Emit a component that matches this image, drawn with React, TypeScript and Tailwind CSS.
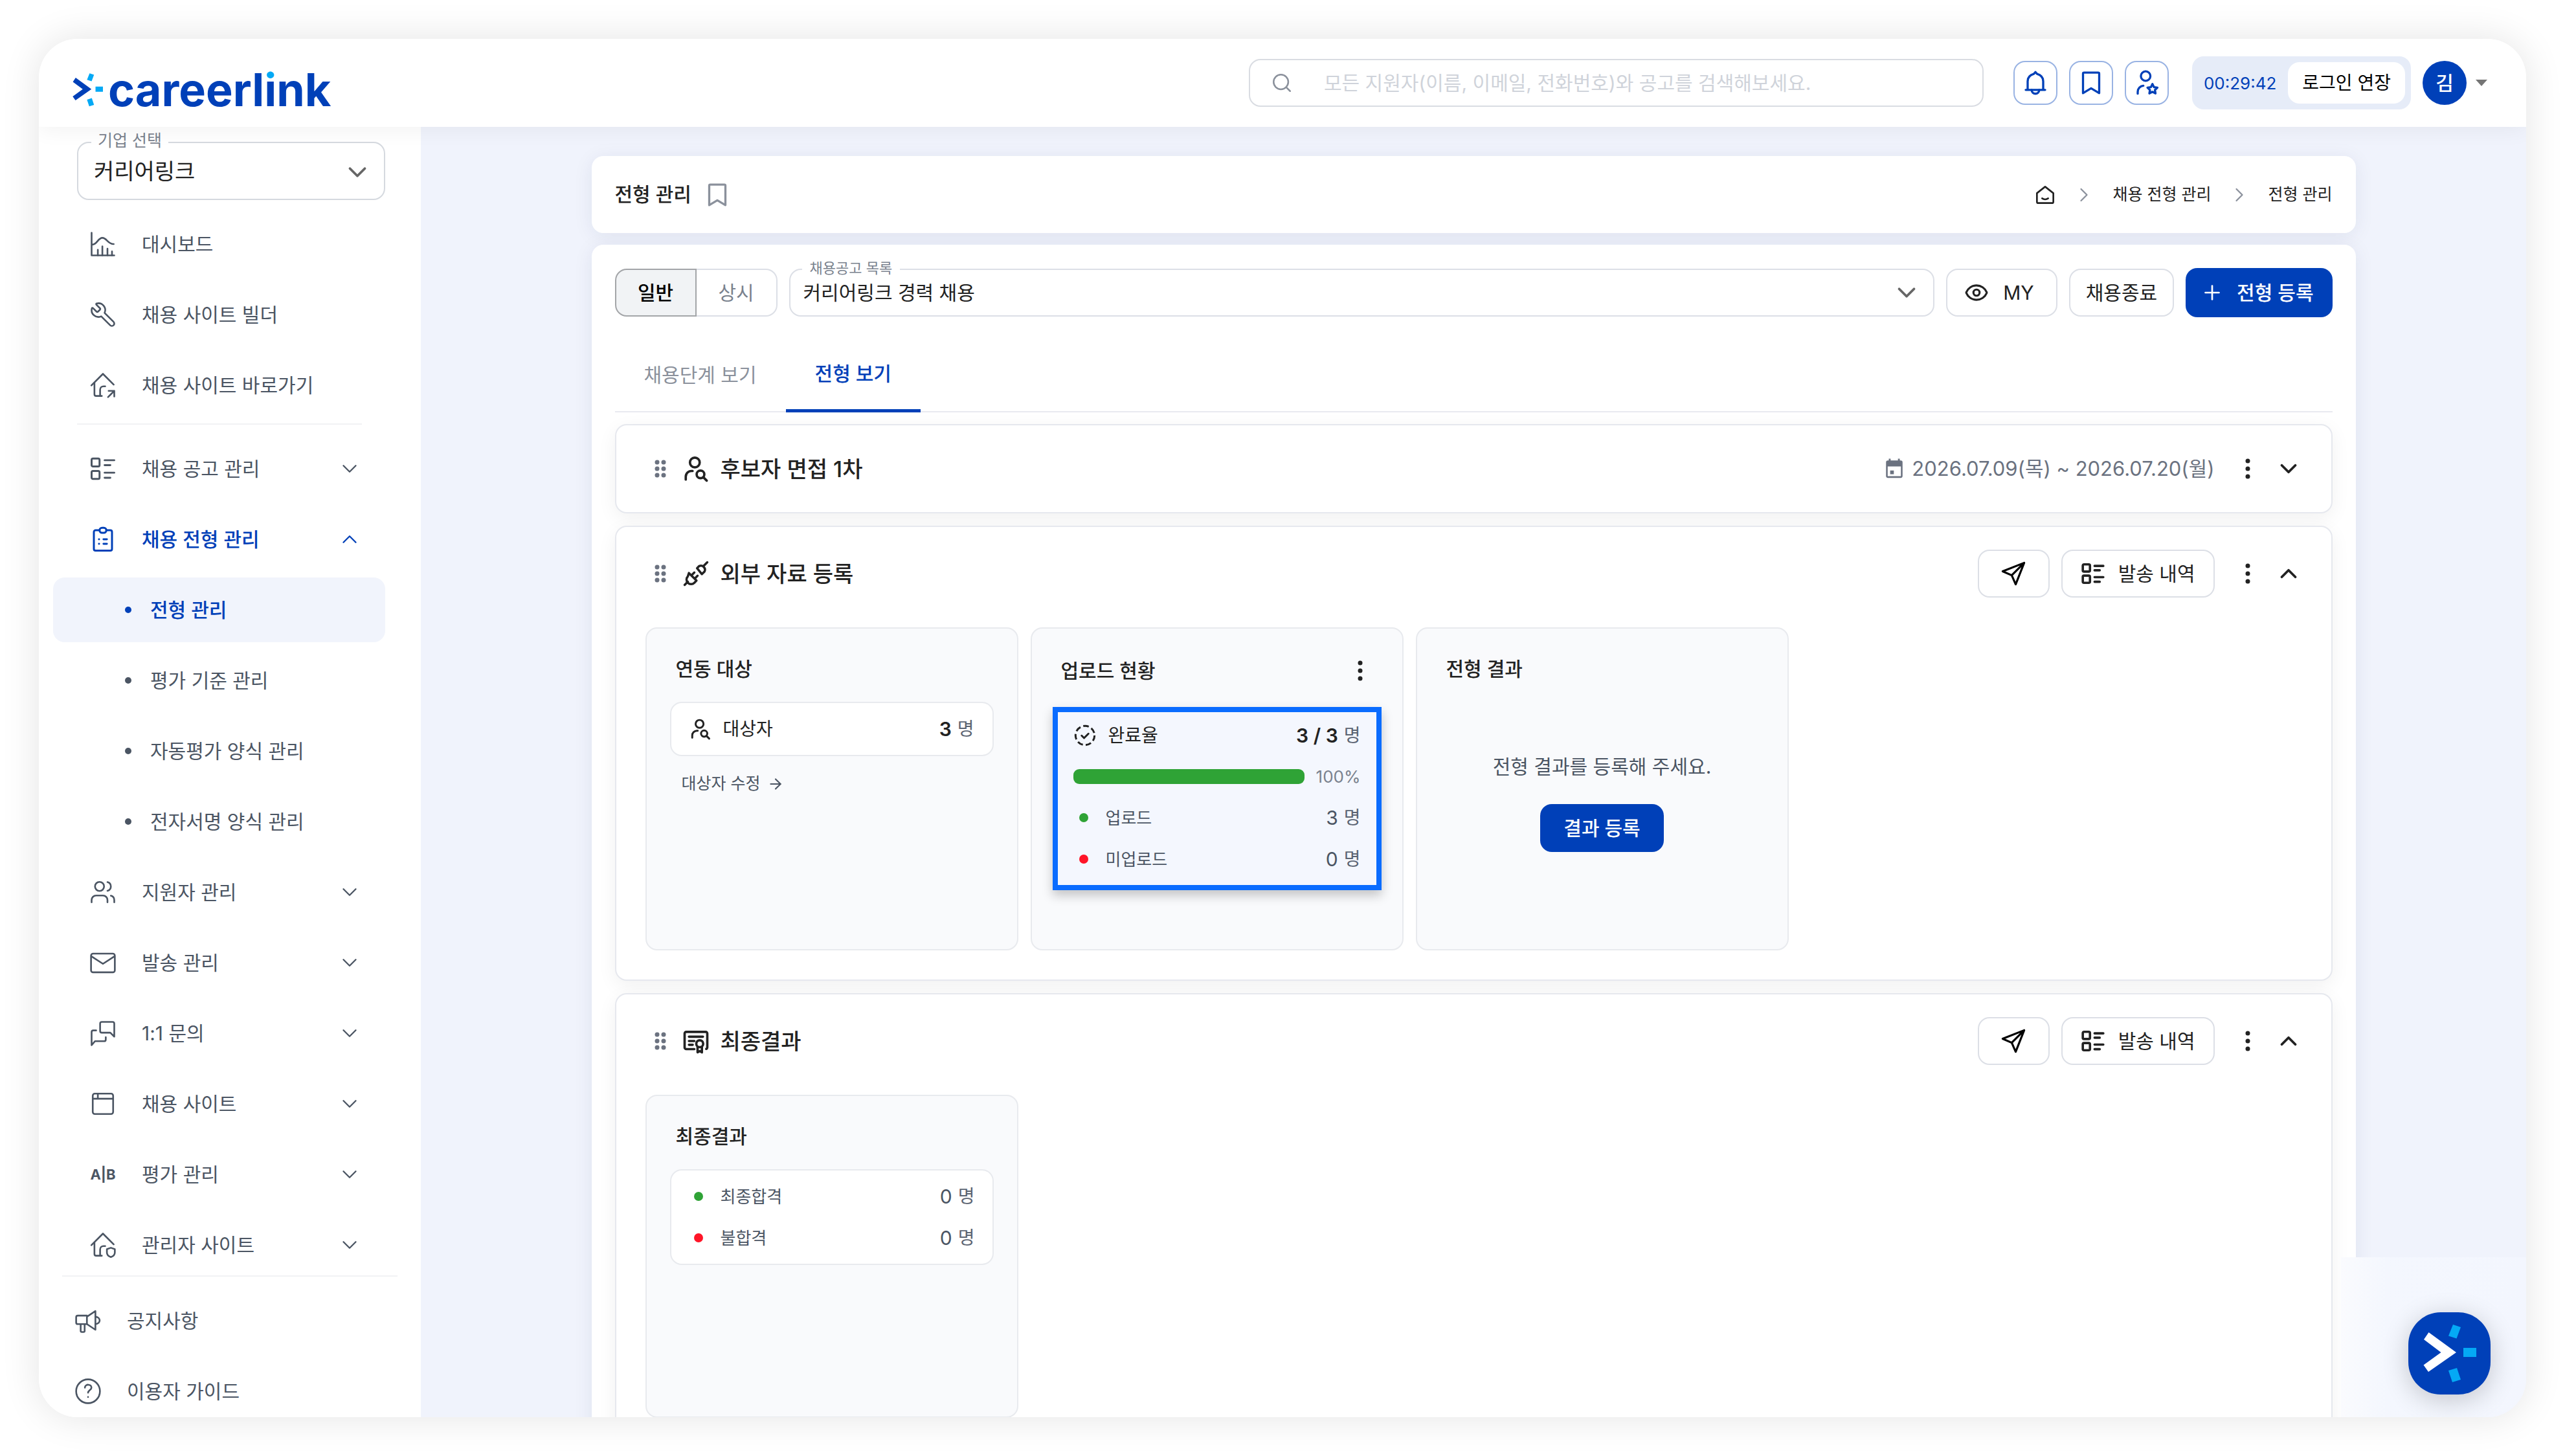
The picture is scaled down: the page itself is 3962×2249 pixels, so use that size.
import type { ReactNode } from "react";
import { ArrowRight, ChevronDown, ChevronRight, ChevronUp, Eye, Plus, Search, Users, Wrench } from "lucide-react";

type IconProps = { className?: string; width?: number; children?: ReactNode };

const Icon = ({ className = "size-[42px]", width = 1.5, children }: IconProps) => (
  <svg
    className={"shrink-0 " + className}
    viewBox="0 0 24 24"
    fill="none"
    stroke="currentColor"
    strokeWidth={width}
    strokeLinecap="round"
    strokeLinejoin="round"
    aria-hidden="true"
  >
    {children}
  </svg>
);

const ChartIcon = () => (
  <Icon>
    <path d="M2 2v20h20" />
    <path d="M2.5 12.5C7 12.5 7.500 6.500 11.500 6.500S16 12 21.500 12" />
    <path d="M7.500 17v5M11.500 14v8M16 16v6M20 18.500V22" />
  </Icon>
);

const house = (
  <>
    <path d="M1.800 12.200 12 2l9.500 9.500" />
    <path d="M4.500 10v10a1.500 1.500 0 0 0 1.500 1.500h5" />
    <path d="M9.500 21.500V16a3 3 0 0 1 3-3h1.500" />
  </>
);

const HomeLinkIcon = () => (
  <Icon>
    {house}
    <path d="M16.500 22.500l5.500-5.500M17 17h5v5" />
  </Icon>
);

const HomeShieldIcon = () => (
  <Icon>
    {house}
    <path d="M19 14.500l3.500 1.200v3c0 2-1.500 3.300-3.500 4-2-.7-3.500-2-3.500-4v-3z" />
  </Icon>
);

const ListIcon = ({ className, width = 2 }: IconProps) => (
  <Icon className={className} width={width}>
    <rect x="2" y="3" width="7" height="7" rx="1.200" />
    <rect x="2" y="14" width="7" height="7" rx="1.200" />
    <path d="M13.500 4.500h8.500M13.500 8.800h5M13.500 15.500h8.500M13.500 20h5" />
  </Icon>
);

const ClipboardIcon = () => (
  <Icon width={1.7}>
    <path d="M9 4H5.500A1.500 1.500 0 0 0 4 5.500v15A1.500 1.500 0 0 0 5.500 22h13a1.500 1.500 0 0 0 1.500-1.500v-15A1.500 1.500 0 0 0 18.500 4H15" />
    <rect x="9" y="1.800" width="6" height="4.500" rx="2.200" />
    <path d="M8.500 12h.1M8.500 16h.1M12.500 12h3M12.500 16h3" />
  </Icon>
);

const MailIcon = () => (
  <Icon>
    <rect x="1.500" y="4" width="21" height="16.500" rx="1.800" />
    <path d="M2 6.500l10 6.500 10-6.500" />
  </Icon>
);

const ChatIcon = () => (
  <Icon>
    <path d="M11 2h9.500A1.500 1.500 0 0 1 22 3.500V15l-3.500-3.500H11A1.500 1.500 0 0 1 9.500 10V3.500A1.500 1.500 0 0 1 11 2z" />
    <path d="M6 9.500H3.500A1.500 1.500 0 0 0 2 11v11.500L5 19h8a1.500 1.500 0 0 0 1.500-1.500v-2" />
  </Icon>
);

const BrowserIcon = () => (
  <Icon>
    <rect x="3" y="3" width="18" height="18" rx="1.800" />
    <path d="M3 7.500h18M7.500 3v4.500" />
  </Icon>
);

const MegaphoneIcon = () => (
  <Icon>
    <path d="M18.500 3.500v16.500l-7.500-5V8.500z" />
    <path d="M11 7.500H3A1.500 1.500 0 0 0 1.500 9v4.500A1.500 1.500 0 0 0 3 15h8" />
    <path d="M5.500 15v6a1 1 0 0 0 1 1h1.500a1 1 0 0 0 1-1v-6" />
    <path d="M18.500 8.500c5 .5 5 6 0 6.500" />
  </Icon>
);

const HelpIcon = () => (
  <Icon>
    <circle cx="12" cy="12" r="10.500" />
    <path d="M9.200 8.800c.3-3.500 5.800-3.300 5.800 0 0 2-3 2.500-3 4.500M12 17v.1" />
  </Icon>
);

const PersonSearchIcon = ({ className }: IconProps) => (
  <Icon className={className} width={2.1}>
    <circle cx="11" cy="6.500" r="4.300" />
    <path d="M3 21.500v-2.500a5 5 0 0 1 5-5h1" />
    <circle cx="16" cy="17" r="3.400" />
    <path d="M18.500 19.500l3 3" />
  </Icon>
);

const PersonStarIcon = () => (
  <Icon width={1.900}>
    <circle cx="11" cy="6" r="4.200" />
    <path d="M4 21.500v-1.500a5.500 5.500 0 0 1 5-5.500" />
    <path d="M17 13l1.400 2.800 3 .4-2.200 2.100.5 3-2.700-1.400-2.700 1.400.5-3-2.200-2.100 3-.4z" />
  </Icon>
);

const BellIcon = () => (
  <Icon className="size-[40px]" width={2}>
    <path d="M3 18.500h18M4.800 18.500V10.500c0-4 3-6 5.700-6.800L12 2l1.500 1.700c2.700.8 5.700 2.800 5.700 6.800v8" />
    <path d="M8.500 18.500c0 4.700 7 4.700 7 0" />
  </Icon>
);

const BookmarkIcon = () => (
  <Icon className="size-[40px]" width={2}>
    <path d="M4.500 3.500a1 1 0 0 1 1-1h13a1 1 0 0 1 1 1v18L12 17l-7.500 4.500z" />
  </Icon>
);

const PlugIcon = () => (
  <Icon className="size-[40px]" width={2.100}>
    <path d="M13 7l2-2a3.800 3.800 0 0 1 5 5l-2.500 2.500zM19.500 4.500l3-3" />
    <path d="M5.500 11.500l7 7-2 2a4 4 0 0 1-6-6zM4.500 19.500l-3 3M8 13.500l2.500-2.500M11 16.500l2.500-2.500" />
  </Icon>
);

const CertificateIcon = () => (
  <Icon className="size-[40px]" width={2.200}>
    <path d="M10.500 19.500H3A1.500 1.500 0 0 1 1.500 18V5A1.500 1.500 0 0 1 3 3.500h18A1.500 1.500 0 0 1 22.500 5v13a1.500 1.500 0 0 1-1 1.300" />
    <path d="M5.500 8h13M5.500 12h5M5.500 15.500h3.500" />
    <circle cx="15.500" cy="14.500" r="3.200" />
    <path d="M13.500 17.500v5l2-1.200 2 1.200v-5" />
  </Icon>
);

const SendIcon = () => (
  <Icon className="size-[42px]" width={1.800}>
    <path d="M21.500 2.500l-7.500 19-3.500-8-8-3.500zM21.500 2.500l-11 11" />
  </Icon>
);

const CheckDashedIcon = () => (
  <Icon className="size-[36px]" width={2}>
    <circle cx="12" cy="12" r="9.800" strokeDasharray="5.800 3" strokeLinecap="butt" />
    <path d="M8.500 12.200l2.500 2.500 4.500-4.500" />
  </Icon>
);

const HomeIcon = () => (
  <Icon className="size-[32px]" width={2}>
    <path d="M2.500 10 12 2.500l9.500 7.500v10a1.500 1.500 0 0 1-1.500 1.500H4A1.500 1.500 0 0 1 2.500 20z" />
    <path d="M8.500 16c2 1.500 5 1.500 7 0" />
  </Icon>
);

const CalendarIcon = () => (
  <svg className="size-[34px]" viewBox="0 0 24 24" fill="currentColor" aria-hidden="true">
    <path d="M5 3h1V1h2v2h8V1h2v2h1a2 2 0 0 1 2 2v15a2 2 0 0 1-2 2H5a2 2 0 0 1-2-2V5a2 2 0 0 1 2-2zm-.2 6.500v10.700h14.400V9.500zM7.500 14h4v4h-4z" fillRule="evenodd" />
  </svg>
);

const GripIcon = () => (
  <svg className="h-[28px] w-[18px] text-[#6b7280]" viewBox="0 0 18 28" fill="currentColor" aria-hidden="true">
    {[4, 14, 24].map((y) => (
      <g key={y}>
        <circle cx="4" cy={y} r="3.500" />
        <circle cx="14" cy={y} r="3.500" />
      </g>
    ))}
  </svg>
);

const MoreButton = () => (
  <button type="button" aria-label="더보기" className="flex h-[36px] w-[16px] items-center justify-center">
    <svg className="h-[32px] w-[8px]" viewBox="0 0 8 32" fill="#222" aria-hidden="true">
      <circle cx="4" cy="4" r="3.500" />
      <circle cx="4" cy="16" r="3.500" />
      <circle cx="4" cy="28" r="3.500" />
    </svg>
  </button>
);

// the ">" and three rays of the careerlink symbol
const Symbol = ({ className, arrow }: { className: string; arrow: string }) => (
  <svg className={className} viewBox="0 0 82 90" aria-hidden="true">
    <path d="M8.500 12 51 43 8 73 .5 62.500 27.500 43 1 23z" fill={arrow} />
    <path d="M46 0l12 4-6.500 17.500L39 17.500zM62 36h20v14H62zM39 71l13-4 6 18-13 4z" fill="#04a9f5" />
  </svg>
);

const menu = [
  { label: "채용 공고 관리", icon: <ListIcon width={1.700} /> },
  {
    label: "채용 전형 관리",
    icon: <ClipboardIcon />,
    open: true,
    children: ["전형 관리", "평가 기준 관리", "자동평가 양식 관리", "전자서명 양식 관리"],
  },
  { label: "지원자 관리", icon: <Users className="size-[42px]" strokeWidth={1.500} /> },
  { label: "발송 관리", icon: <MailIcon /> },
  { label: "1:1 문의", icon: <ChatIcon /> },
  { label: "채용 사이트", icon: <BrowserIcon /> },
  { label: "평가 관리", icon: <span className="text-[22px] font-bold whitespace-nowrap">A|B</span> },
  { label: "관리자 사이트", icon: <HomeShieldIcon /> },
];

const NavLink = ({ icon, label }: { icon: ReactNode; label: string }) => (
  <a href="#" className="flex h-[100px] items-center gap-[39px] pl-[56px]">
    <span className="flex w-[42px] justify-center">{icon}</span>
    {label}
  </a>
);

const Sidebar = () => (
  <aside className="flex w-[590px] shrink-0 flex-col overflow-hidden bg-white text-[30px] text-[#4b5563]">
    <div className="relative mr-[55px] ml-[59px] mt-[23px]">
      <label htmlFor="company" className="absolute -top-[20px] left-[22px] bg-white px-[10px] text-[25px] leading-[36px] text-[#7a828e]">
        기업 선택
      </label>
      <select id="company" className="h-[90px] w-full appearance-none rounded-[18px] border-2 border-[#d5d9df] px-[24px] text-[34px] text-[#222]">
        <option>커리어링크</option>
      </select>
      <ChevronDown className="pointer-events-none absolute top-[24px] right-[20px] size-[46px] text-[#666]" strokeWidth={2} />
    </div>
    <nav className="mt-[18px] mr-[55px] ml-[22px] flex flex-col gap-[9px]">
      <NavLink icon={<ChartIcon />} label="대시보드" />
      <NavLink icon={<Wrench className="size-[42px] -scale-x-100" strokeWidth={1.500} />} label="채용 사이트 빌더" />
      <NavLink icon={<HomeLinkIcon />} label="채용 사이트 바로가기" />
      <hr className="mr-[36px] mb-[9px] ml-[37px] border-t-2 border-[#f1f2f4]" />
      {menu.map((item) => (
        <div key={item.label} className="flex flex-col gap-[9px]">
          <button
            type="button"
            className={
              "flex h-[100px] items-center gap-[39px] pr-[36px] pl-[56px] " + (item.open ? "font-medium text-[#0040b8]" : "")
            }
          >
            <span className="flex w-[42px] justify-center">{item.icon}</span>
            {item.label}
            {item.open ? (
              <ChevronUp className="ml-auto size-[38px]" strokeWidth={1.500} />
            ) : (
              <ChevronDown className="ml-auto size-[38px]" strokeWidth={1.500} />
            )}
          </button>
          {item.children?.map((child, i) => (
            <a
              key={child}
              href="#"
              className={
                "flex h-[100px] items-center gap-[29px] rounded-[18px] pl-[111px] " +
                (i === 0 ? "bg-[#f1f4fc] font-medium text-[#0040b8]" : "")
              }
            >
              <span className="size-[10px] rounded-full bg-current"></span>
              {child}
            </a>
          ))}
        </div>
      ))}
    </nav>
    <div className="mx-[36px] -mt-[3px] flex flex-col gap-[9px] border-t-2 border-[#f1f2f4] pt-[18px]">
      <a href="#" className="flex h-[100px] items-center gap-[39px] pl-[19px]">
        <MegaphoneIcon />
        공지사항
      </a>
      <a href="#" className="flex h-[100px] items-center gap-[39px] pl-[19px]">
        <HelpIcon />
        이용자 가이드
      </a>
    </div>
  </aside>
);

const Header = () => (
  <header className="relative z-10 flex h-[136px] shrink-0 items-center bg-white pr-[60px] pl-[52px] shadow-[0_6px_30px_rgba(0,0,0,0.05)]">
    <a href="#" className="mt-[22px] flex items-center gap-[8px]" aria-label="careerlink">
      <Symbol className="h-[52px] w-[47px]" arrow="#0040b8" />
      <span className="text-[70px] leading-[70px] font-bold text-[#0040b8]">
        careerl
        <span className="bg-[linear-gradient(#04a9f5_26px,#0040b8_26px)] bg-clip-text text-transparent">i</span>
        nk
      </span>
    </a>
    <div className="ml-auto flex h-[74px] w-[1135px] items-center rounded-[18px] border-2 border-[#d9dce2]">
      <Search className="mx-[32px] size-[34px] text-[#8b919c]" strokeWidth={1.800} />
      <input
        type="search"
        aria-label="검색"
        placeholder="모든 지원자(이름, 이메일, 전화번호)와 공고를 검색해보세요."
        className="ml-[16px] flex-1 text-[30px] outline-none placeholder:text-[#cfd3da]"
      />
    </div>
    <div className="ml-[46px] flex gap-[18px] text-[#0040b8]">
      <button type="button" aria-label="알림" className="flex size-[68px] items-center justify-center rounded-[18px] border-2 border-[#99b3e3]">
        <BellIcon />
      </button>
      <button type="button" aria-label="북마크" className="flex size-[68px] items-center justify-center rounded-[18px] border-2 border-[#99b3e3]">
        <BookmarkIcon />
      </button>
      <button type="button" aria-label="관심 지원자" className="flex size-[68px] items-center justify-center rounded-[18px] border-2 border-[#99b3e3]">
        <PersonStarIcon />
      </button>
    </div>
    <div className="ml-[36px] flex h-[82px] items-center gap-[18px] rounded-[18px] bg-[#e6ecf8] pr-[9px] pl-[18px]">
      <span className="text-[26px] text-[#0040b8]">00:29:42</span>
      <button type="button" className="h-[64px] rounded-[18px] bg-white px-[22px] text-[28px] text-black">
        로그인 연장
      </button>
    </div>
    <button type="button" className="ml-[18px] flex items-center gap-[14px]" aria-label="계정">
      <span className="flex size-[68px] items-center justify-center rounded-full bg-[#0040b8] text-[30px] font-medium text-white">김</span>
      <svg className="h-[10px] w-[18px]" viewBox="0 0 18 10" fill="#757575" aria-hidden="true">
        <path d="M0 0h18L9 10z" />
      </svg>
    </button>
  </header>
);

const Panel = ({ title, more, children }: { title: string; more?: boolean; children: ReactNode }) => (
  <section className="flex h-[499px] w-[576px] flex-col rounded-[18px] border-2 border-[#e8eaee] bg-[#f9fafc] px-[36px]">
    <div className={"flex items-center justify-between px-[9px] " + (more ? "mt-[38px] mb-[29px] h-[54px]" : "mt-[38px] mb-[27px] h-[48px]")}>
      <h3 className="text-[30px] font-medium text-[#222]">{title}</h3>
      {more && (
        <span className="mr-[12px]">
          <MoreButton />
        </span>
      )}
    </div>
    {children}
  </section>
);

const Count = ({ value, strong }: { value: string; strong?: boolean }) => (
  <span className="ml-auto flex items-center gap-[9px]">
    <span className={strong ? "text-[30px] font-semibold text-[#222]" : "text-[30px]"}>{value}</span>
    <span className="text-[28px] text-[#5b6472]">명</span>
  </span>
);

const StatusRow = ({ label, value, color }: { label: string; value: string; color: string }) => (
  <li className="flex h-[64px] items-center text-[26px] text-[#4b5563]">
    <span className={"mx-[9px] size-[14px] rounded-full " + color}></span>
    <span className="ml-[18px]">{label}</span>
    <Count value={value} />
  </li>
);

type StageProps = { icon: ReactNode; title: string; period?: string; children?: ReactNode };

const Stage = ({ icon, title, period, children }: StageProps) => (
  <article className="rounded-[18px] border-2 border-[#e6e8ee] bg-white px-[45px] shadow-[0_8px_30px_rgba(0,0,0,0.06)]">
    <div className={"mb-[30px] flex h-[74px] items-center pl-[14px] " + (children ? "mt-[35px]" : "mt-[30px]")}>
      <GripIcon />
      <span className="mr-[18px] ml-[26px] flex w-[40px] justify-center text-[#222]">{icon}</span>
      <h2 className="text-[34px] font-medium text-[#222]">{title}</h2>
      {period && (
        <span className="ml-auto flex items-center gap-[10px] text-[31px] text-[#6b7280]">
          <CalendarIcon />
          {period}
        </span>
      )}
      {children && (
        <div className="ml-auto flex gap-[18px]">
          <button type="button" aria-label="발송" className="flex h-[74px] w-[111px] items-center justify-center rounded-[18px] border-2 border-[#dcdfe6]">
            <SendIcon />
          </button>
          <button type="button" className="flex h-[74px] items-center gap-[20px] rounded-[18px] border-2 border-[#dcdfe6] px-[28px] text-[30px] text-[#222]">
            <ListIcon className="size-[38px]" width={2.300} />
            발송 내역
          </button>
        </div>
      )}
      <span className="mr-[34px] ml-[43px]">
        <MoreButton />
      </span>
      <button type="button" aria-label={children ? "접기" : "펼치기"} className="text-[#222]">
        {children ? <ChevronUp className="size-[42px]" strokeWidth={2.200} /> : <ChevronDown className="size-[42px]" strokeWidth={2.200} />}
      </button>
    </div>
    {children && <div className="mt-[46px] mb-[45px] flex gap-[19px]">{children}</div>}
  </article>
);

const Toolbar = () => (
  <div className="flex items-center gap-[18px]">
    <div className="flex h-[74px] text-[30px]">
      <button type="button" className="w-[126px] rounded-l-[18px] border-2 border-[#a3a5a8] bg-[#f1f3f5] font-medium text-black">
        일반
      </button>
      <button type="button" className="w-[125px] rounded-r-[18px] border-2 border-l-0 border-[#dcdfe6] text-[#7a828e]">
        상시
      </button>
    </div>
    <div className="relative flex-1">
      <label htmlFor="posting" className="absolute -top-[17px] left-[20px] bg-white px-[12px] text-[22px] leading-[32px] text-[#7a828e]">
        채용공고 목록
      </label>
      <select id="posting" className="h-[74px] w-full appearance-none rounded-[18px] border-2 border-[#dcdfe6] px-[20px] text-[30px] text-[#222]">
        <option>커리어링크 경력 채용</option>
      </select>
      <ChevronDown className="pointer-events-none absolute top-[14px] right-[20px] size-[46px] text-[#666]" strokeWidth={2} />
    </div>
    <button type="button" className="flex h-[74px] items-center gap-[22px] rounded-[18px] border-2 border-[#dcdfe6] px-[26px] pr-[34px] text-[30px] text-[#222]">
      <Eye className="size-[38px]" strokeWidth={2} />
      MY
    </button>
    <button type="button" className="h-[74px] rounded-[18px] border-2 border-[#dcdfe6] px-[24px] text-[30px] text-[#222]">
      채용종료
    </button>
    <button type="button" className="flex h-[76px] items-center gap-[20px] rounded-[18px] bg-[#0040b8] pr-[29px] pl-[23px] text-[30px] font-medium text-white">
      <Plus className="size-[36px]" strokeWidth={1.800} />
      전형 등록
    </button>
  </div>
);

const App = () => {
  return (
    <div className="flex h-screen bg-white p-[60px] font-['Inter','Noto_Sans_CJK_KR',sans-serif]">
      <div className="relative flex flex-1 flex-col overflow-hidden rounded-[60px] bg-white shadow-[0_0_60px_rgba(0,0,0,0.11)]">
        <Header />
        <div className="flex min-h-0 flex-1">
          <Sidebar />
          <main className="flex-1 overflow-hidden bg-[#f0f3fc] px-[60px] pt-[45px]">
            <div className="mx-auto flex max-w-[2725px] flex-col gap-[18px]">
              <div className="flex h-[119px] items-center rounded-[18px] bg-white px-[36px] shadow-[0_4px_30px_rgba(30,40,90,0.08)]">
                <h1 className="text-[30px] font-medium text-[#222]">전형 관리</h1>
                <button type="button" aria-label="즐겨찾기" className="ml-[20px] text-[#8b919c]">
                  <BookmarkIcon />
                </button>
                <nav className="ml-auto flex items-center gap-[26px] text-[25px] text-[#222]">
                  <a href="#" aria-label="홈">
                    <HomeIcon />
                  </a>
                  <ChevronRight className="size-[36px] text-[#8b919c]" strokeWidth={1.500} />
                  <a href="#">채용 전형 관리</a>
                  <ChevronRight className="size-[36px] text-[#8b919c]" strokeWidth={1.500} />
                  <span>전형 관리</span>
                </nav>
              </div>

              <div className="rounded-[18px] bg-white px-[36px] pt-[36px] pb-[37px] shadow-[0_4px_30px_rgba(30,40,90,0.08)]">
                <Toolbar />
                <div className="mt-[33px] flex border-b-2 border-[#e8eaf0] text-[30px]">
                  <button type="button" className="h-[112px] px-[45px] text-[#8b919c]">
                    채용단계 보기
                  </button>
                  <button type="button" className="-mb-[2px] h-[114px] border-b-5 border-[#0040b8] px-[45px] font-medium text-[#0040b8]">
                    전형 보기
                  </button>
                </div>

                <div className="mt-[18px] flex flex-col gap-[19px]">
                  <Stage icon={<PersonSearchIcon className="size-[42px]" />} title="후보자 면접 1차" period="2026.07.09(목) ~ 2026.07.20(월)" />

                  <Stage icon={<PlugIcon />} title="외부 자료 등록">
                    <Panel title="연동 대상">
                      <div className="flex h-[84px] items-center gap-[18px] rounded-[18px] border-2 border-[#e8eaee] bg-white px-[28px] text-[28px] text-[#222]">
                        <PersonSearchIcon className="size-[34px]" />
                        대상자
                        <Count value="3" strong />
                      </div>
                      <a href="#" className="mt-[24px] ml-[18px] flex items-center gap-[10px] text-[25px] text-[#4b5563]">
                        대상자 수정
                        <ArrowRight className="size-[26px]" strokeWidth={2} />
                      </a>
                    </Panel>
                    <Panel title="업로드 현황" more>
                      <div className="-mx-[4px] flex flex-col border-8 border-[#0a6cff] bg-[#f4f7fe] px-[24px] pt-[10px] pb-[8px] shadow-[0_8px_16px_rgba(0,0,0,0.22)]">
                        <div className="flex h-[52px] items-center gap-[18px] text-[28px] text-[#222]">
                          <CheckDashedIcon />
                          완료율
                          <Count value="3 / 3" strong />
                        </div>
                        <div className="mt-[5px] flex h-[64px] items-center gap-[18px] text-[26px] text-[#7a828e]">
                          <div role="progressbar" aria-label="완료율" aria-valuenow={100} className="h-[23px] flex-1 rounded-[9px] bg-[#2fa336]"></div>
                          100%
                        </div>
                        <ul>
                          <StatusRow label="업로드" value="3" color="bg-[#2fa336]" />
                          <StatusRow label="미업로드" value="0" color="bg-[#ff1528]" />
                        </ul>
                      </div>
                    </Panel>
                    <Panel title="전형 결과">
                      <div className="flex flex-col items-center gap-[36px] pt-[78px]">
                        <p className="text-[30px] leading-[44px] text-[#4b5563]">전형 결과를 등록해 주세요.</p>
                        <button type="button" className="h-[74px] rounded-[18px] bg-[#0040b8] px-[36px] text-[30px] font-medium text-white">
                          결과 등록
                        </button>
                      </div>
                    </Panel>
                  </Stage>

                  <Stage icon={<CertificateIcon />} title="최종결과">
                    <Panel title="최종결과">
                      <ul className="rounded-[18px] border-2 border-[#e8eaee] bg-white py-[8px] pr-[27px] pl-[26px]">
                        <StatusRow label="최종합격" value="0" color="bg-[#2fa336]" />
                        <StatusRow label="불합격" value="0" color="bg-[#ff1528]" />
                      </ul>
                    </Panel>
                  </Stage>
                </div>
              </div>
            </div>
          </main>
        </div>

        <div className="absolute right-0 bottom-0 bg-linear-to-r from-[#fafbfe] via-[#f4f7fe] via-25% to-[#f3f6fe] pt-[85px] pr-[55px] pb-[35px] pl-[104px]">
          <button
            type="button"
            aria-label="careerlink 채팅"
            className="flex size-[127px] items-center justify-center rounded-[50px] bg-[#0040b8] shadow-[0_8px_40px_rgba(0,0,0,0.2)]"
          >
            <Symbol className="h-[90px] w-[82px]" arrow="#fff" />
          </button>
        </div>
      </div>
    </div>
  );
};

export default App;
